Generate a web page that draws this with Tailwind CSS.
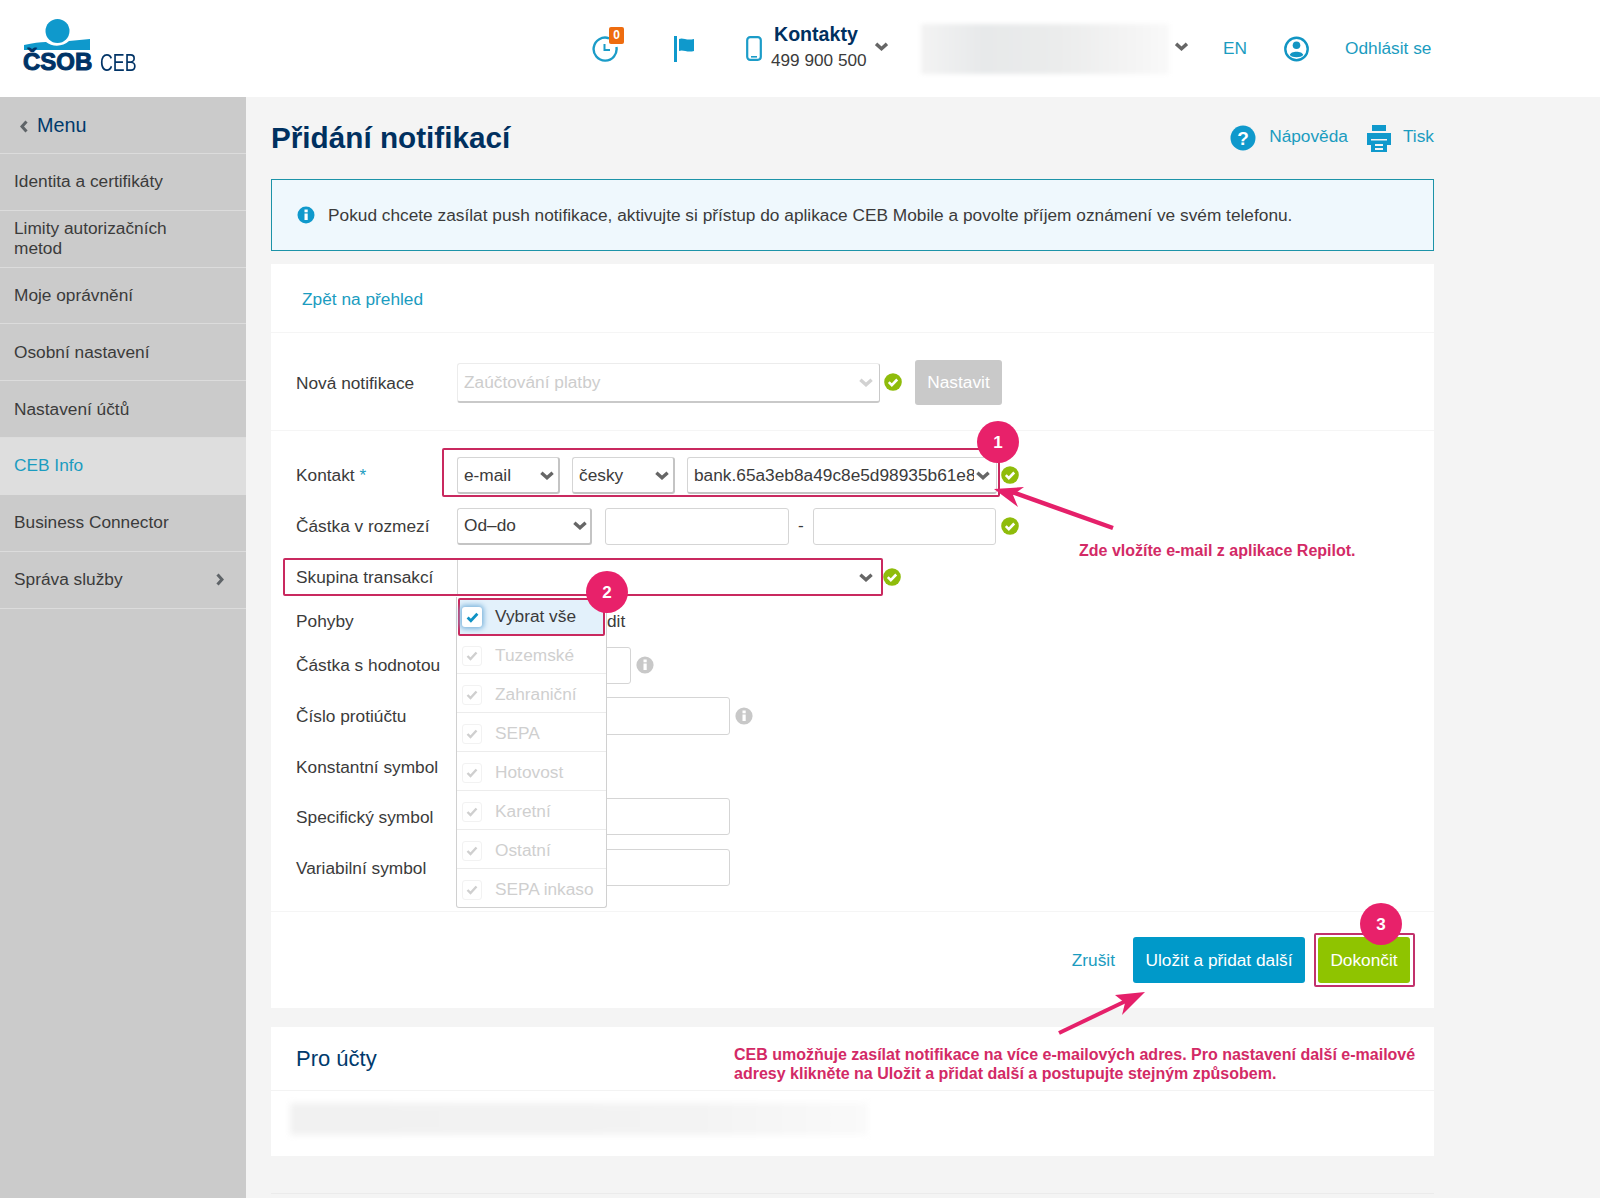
<!DOCTYPE html>
<html lang="cs">
<head>
<meta charset="utf-8">
<script src="https://cdn.jsdelivr.net/npm/@tailwindcss/browser@4"></script>
</head>
<body class="m-0">
<div class="relative w-[1600px] h-[1198px] overflow-hidden bg-[#f4f4f4] font-['Liberation_Sans',Arial,sans-serif] text-[17.3px] text-[#3b3b3b]">

  <!-- header -->
  <header class="flex items-center h-[97px] bg-white">
    <div class="relative w-[593px] h-[97px] shrink-0">
      <svg class="absolute left-[24px] top-[19px]" width="68" height="32" viewBox="24 19 68 32"><circle cx="57.5" cy="31" r="12" fill="#0f99cc"/><path d="M24 45C33 43 40 42 46 42C52 47 63 47 69 41L90 39V50H24Z" fill="#0f99cc"/></svg>
      <span class="absolute left-[23px] top-[48px] text-[24px] leading-[28px] font-bold text-[#003366] [-webkit-text-stroke:1px_#003366]">ČSOB</span>
      <span class="absolute left-[100px] top-[50px] text-[24px] leading-[26px] text-[#003366] origin-left scale-x-[0.74]">CEB</span>
    </div>
    <div class="relative w-[24px] h-[24px] shrink-0 mt-[1px]">
      <svg width="26" height="26" viewBox="0 0 26 26" class="-ml-[1px] -mt-[1px]" fill="none" stroke="#1b9cc8" stroke-width="2.4"><path d="M17 2.3A11.5 11.5 0 1 0 24.4 11"/><path d="M12.5 8v6h5.5" stroke-width="2"/></svg>
      <span class="absolute left-[16px] -top-[10px] w-[15px] h-[17px] rounded-[2px] bg-[#ee6c0f] text-white text-[12px] leading-[17px] font-bold text-center">0</span>
    </div>
    <svg class="ml-[57px] shrink-0" width="20" height="26" viewBox="0 0 20 26" fill="#0f99cc"><rect x="0" y="0" width="3" height="26"/><path d="M5 3C9 1 12 5 20 3V15C13 17 9 13 5 15Z"/></svg>
    <svg class="ml-[52px] shrink-0" width="16" height="25" viewBox="0 0 16 25" fill="none" stroke="#1b9cc8"><rect x="1.2" y="1.2" width="13.6" height="22.6" rx="3" stroke-width="2.2"/><rect x="5" y="20" width="6" height="1.6" fill="#1b9cc8" stroke="none"/></svg>
    <div class="ml-[9px] w-[104px] shrink-0 -mt-[4px]">
      <div class="pl-[3px] text-[19.6px] leading-[24px] font-bold text-[#00305f]">Kontakty</div>
      <div class="text-[17.2px] leading-[22px] mt-[3px]">499 900 500</div>
    </div>
    <svg class="shrink-0 -mt-[5px]" width="13" height="9" viewBox="0 0 12 8" fill="none" stroke="#666" stroke-width="3.2"><path d="M1 1.5L6 6L11 1.5"/></svg>
    <div class="ml-[33px] w-[248px] h-[50px] shrink-0 blur-[2px] bg-[linear-gradient(90deg,#f3f3f3,#e7e9ea_25%,#ebecec_55%,#f4f4f4_85%,#f9f9f9)]"></div>
    <svg class="ml-[6px] shrink-0 -mt-[4px]" width="13" height="9" viewBox="0 0 12 8" fill="none" stroke="#666" stroke-width="3.2"><path d="M1 1.5L6 6L11 1.5"/></svg>
    <span class="ml-[35px] w-[24px] text-[#1b9cc0]">EN</span>
    <svg class="ml-[37px] shrink-0" width="25" height="26" viewBox="0 0 25 26"><circle cx="12.5" cy="13" r="11.2" fill="none" stroke="#1295c3" stroke-width="2.4"/><circle cx="12.5" cy="9.3" r="3.8" fill="#1295c3"/><path d="M5.8 19C6.5 14.5 18.5 14.5 19.2 19C17 22 8 22 5.8 19Z" fill="#1295c3"/></svg>
    <span class="ml-[36px] text-[#1b9cc0]">Odhlásit se</span>
  </header>

  <div class="flex h-[1101px]">
    <!-- sidebar -->
    <nav class="w-[246px] shrink-0 bg-[#cbcbcb]">
      <div class="flex items-center h-[57px] pl-[20px] pt-[2px] border-b border-[#dcdcdc] text-[19.8px] text-[#003a6c]">
        <svg width="8" height="13" viewBox="0 0 8 13" fill="none" stroke="#5f6468" stroke-width="3" class="mr-[9px]"><path d="M6.5 1.5L2 6.5L6.5 11.5"/></svg>Menu
      </div>
      <div class="flex items-center h-[57px] pl-[14px] border-b border-[#dcdcdc]">Identita a certifikáty</div>
      <div class="flex items-center h-[57px] pl-[14px] pr-[40px] pb-[3px] leading-[20px] border-b border-[#dcdcdc]">Limity autorizačních metod</div>
      <div class="flex items-center h-[56px] pl-[14px] border-b border-[#dcdcdc]">Moje oprávnění</div>
      <div class="flex items-center h-[57px] pl-[14px] pt-[2px] border-b border-[#dcdcdc]">Osobní nastavení</div>
      <div class="flex items-center h-[57px] pl-[14px] pt-[2px] border-b border-[#dcdcdc]">Nastavení účtů</div>
      <div class="flex items-center h-[57px] pl-[14px] pb-[2px] bg-[#dedede] text-[#1b9cc0]">CEB Info</div>
      <div class="flex items-center h-[57px] pl-[14px] border-b border-[#dcdcdc]">Business Connector</div>
      <div class="flex items-center justify-between h-[57px] pl-[14px] pr-[22px] border-b border-[#dcdcdc]">Správa služby
        <svg width="8" height="13" viewBox="0 0 8 13" fill="none" stroke="#5f6468" stroke-width="3" class="-mt-[1px]"><path d="M1.5 1.5L6 6.5L1.5 11.5"/></svg>
      </div>
    </nav>

    <!-- main -->
    <main class="ml-[25px] w-[1163px] shrink-0">
      <div class="flex items-center h-[82px]">
        <h1 class="text-[29.7px] leading-[36px] font-bold text-[#00305f]">Přidání notifikací</h1>
        <div class="ml-auto flex items-center text-[#1b9cc0] -mt-[2px]">
          <svg width="26" height="26" viewBox="0 0 26 26" class="mt-[2px]"><circle cx="13" cy="13" r="12.5" fill="#0f99cc"/><text x="13" y="19.5" text-anchor="middle" font-family="Liberation Sans" font-weight="700" font-size="19" fill="#fff">?</text></svg>
          <span class="ml-[13px]">Nápověda</span>
          <svg width="26" height="27" viewBox="0 0 26 27" class="ml-[18px] mt-[2px]" fill="#0f99cc"><rect x="6" y="0" width="14" height="6"/><path d="M1 8H25V20H21V14H5V20H1Z"/><path d="M5 15.5H21V27H5ZM9 19V21H17V19ZM9 23V25H17V23Z" fill-rule="evenodd"/></svg>
          <span class="ml-[11px]">Tisk</span>
        </div>
      </div>

      <div class="flex items-center h-[72px] pl-[25px] border border-[#1c93a8] bg-[#eff8fd]">
        <svg width="18" height="18" viewBox="0 0 18 18" class="mr-[13px] shrink-0"><circle cx="9" cy="9" r="8.5" fill="#0f99cc"/><rect x="7.5" y="7.5" width="3.2" height="6.5" fill="#fff"/><rect x="7.5" y="3.5" width="3.2" height="2.8" fill="#fff"/></svg>
        <span class="pt-[2px]">Pokud chcete zasílat push notifikace, aktivujte si přístup do aplikace CEB Mobile a povolte příjem oznámení ve svém telefonu.</span>
      </div>

      <!-- card 1 -->
      <section class="mt-[13px] h-[744px] bg-white">
        <div class="flex items-center h-[69px] pl-[31px] pt-[3px] border-b border-[#f5f5f5] text-[#1b9cc0]">Zpět na přehled</div>
        <div class="flex items-start h-[98px] pl-[25px] pt-[27px] border-b border-[#f5f5f5]">
          <div class="w-[161px] h-[45px] pt-[2px] flex items-center">Nová notifikace</div>
          <div class="flex items-center justify-between w-[423px] h-[40px] mt-[3px] px-[6px] border border-[#ececec] border-b-2 border-b-[#c9c9c9] border-r-[#c9c9c9] rounded-[3px] text-[#cdcdcd]">Zaúčtování platby
            <svg width="14" height="9" viewBox="0 0 12 8" fill="none" stroke="#d2d2d2" stroke-width="3"><path d="M1 1.5L6 6L11 1.5"/></svg>
          </div>
          <svg width="18" height="18" viewBox="0 0 18 18" class="ml-[4px] mt-[13px] shrink-0"><circle cx="9" cy="9" r="8.8" fill="#8fbc0b"/><path d="M4.8 9.2L7.8 12.2L13.2 6.5" fill="none" stroke="#fff" stroke-width="2.6"/></svg>
          <div class="ml-[13px] flex items-center justify-center w-[87px] h-[45px] rounded-[3px] bg-[#c9c9c9] text-white">Nastavit</div>
        </div>

        <div class="pt-[18px] pl-[25px] h-[481px] border-b border-[#f5f5f5]">
          <div class="flex items-center h-[52px]">
            <div class="w-[161px] pt-[2px]">Kontakt <span class="text-[#1b9cc0]">*</span></div>
            <div class="flex items-center justify-between w-[103px] h-[37px] pl-[6px] pr-[4px] pt-[2px] border border-[#d5d5d5] border-b-2 border-b-[#c4c4c4] border-r-2 border-r-[#c4c4c4] rounded-[3px]">e-mail<svg width="14" height="9" viewBox="0 0 12 8" fill="none" stroke="#666" stroke-width="3"><path d="M1 1.5L6 6L11 1.5"/></svg></div>
            <div class="ml-[12px] flex items-center justify-between w-[103px] h-[37px] pl-[6px] pr-[4px] pt-[2px] border border-[#d5d5d5] border-b-2 border-b-[#c4c4c4] border-r-2 border-r-[#c4c4c4] rounded-[3px]">česky<svg width="14" height="9" viewBox="0 0 12 8" fill="none" stroke="#666" stroke-width="3"><path d="M1 1.5L6 6L11 1.5"/></svg></div>
            <div class="ml-[12px] flex items-center justify-between w-[310px] h-[37px] px-[6px] pt-[2px] border border-[#d5d5d5] border-b-2 border-b-[#c4c4c4] rounded-[3px]"><span class="w-[280px] overflow-hidden whitespace-nowrap">bank.65a3eb8a49c8e5d98935b61e8c</span><svg class="shrink-0" width="14" height="9" viewBox="0 0 12 8" fill="none" stroke="#666" stroke-width="3"><path d="M1 1.5L6 6L11 1.5"/></svg></div>
            <svg width="18" height="18" viewBox="0 0 18 18" class="ml-[4px] shrink-0"><circle cx="9" cy="9" r="8.8" fill="#8fbc0b"/><path d="M4.8 9.2L7.8 12.2L13.2 6.5" fill="none" stroke="#fff" stroke-width="2.6"/></svg>
          </div>
          <div class="flex items-center h-[50px]">
            <div class="w-[161px] pt-[2px]">Částka v rozmezí</div>
            <div class="flex items-center justify-between w-[135px] h-[37px] pl-[6px] pr-[3px] border border-[#d5d5d5] border-b-2 border-b-[#c4c4c4] border-r-2 border-r-[#c4c4c4] rounded-[3px]">Od–do<svg width="14" height="9" viewBox="0 0 12 8" fill="none" stroke="#666" stroke-width="3"><path d="M1 1.5L6 6L11 1.5"/></svg></div>
            <div class="ml-[13px] w-[184px] h-[37px] border border-[#d5d5d5] rounded-[3px]"></div>
            <span class="w-[24px] text-center">-</span>
            <div class="w-[183px] h-[37px] border border-[#d5d5d5] rounded-[3px]"></div>
            <svg width="18" height="18" viewBox="0 0 18 18" class="ml-[5px] shrink-0"><circle cx="9" cy="9" r="8.8" fill="#8fbc0b"/><path d="M4.8 9.2L7.8 12.2L13.2 6.5" fill="none" stroke="#fff" stroke-width="2.6"/></svg>
          </div>
          <div class="flex items-center h-[52px]">
            <div class="w-[161px] pt-[2px]">Skupina transakcí</div>
            <div class="flex items-center justify-end w-[423px] h-[37px] px-[7px] border-l border-[#d5d5d5]"><svg width="14" height="9" viewBox="0 0 12 8" fill="none" stroke="#666" stroke-width="3"><path d="M1 1.5L6 6L11 1.5"/></svg></div>
            <svg width="18" height="18" viewBox="0 0 18 18" class="ml-[3px] shrink-0"><circle cx="9" cy="9" r="8.8" fill="#8fbc0b"/><path d="M4.8 9.2L7.8 12.2L13.2 6.5" fill="none" stroke="#fff" stroke-width="2.6"/></svg>
          </div>
          <div class="flex items-center h-[36px] pt-[2px]">
            <div class="w-[311px]">Pohyby</div>
            <span>dit</span>
          </div>
          <div class="flex items-center h-[52px]">
            <div class="w-[161px] pt-[2px]">Částka s hodnotou</div>
            <div class="w-[174px] h-[37px] border border-[#d5d5d5] rounded-[3px]"></div>
            <svg width="18" height="18" viewBox="0 0 18 18" class="ml-[5px] shrink-0"><circle cx="9" cy="9" r="8.6" fill="#c8c8c8"/><rect x="7.5" y="7.5" width="3.2" height="6.5" fill="#fff"/><rect x="7.5" y="3.5" width="3.2" height="2.8" fill="#fff"/></svg>
          </div>
          <div class="flex items-center h-[50px]">
            <div class="w-[161px] pt-[2px]">Číslo protiúčtu</div>
            <div class="w-[273px] h-[38px] -mt-[1px] border border-[#d5d5d5] rounded-[3px]"></div>
            <svg width="18" height="18" viewBox="0 0 18 18" class="ml-[5px] shrink-0"><circle cx="9" cy="9" r="8.6" fill="#c8c8c8"/><rect x="7.5" y="7.5" width="3.2" height="6.5" fill="#fff"/><rect x="7.5" y="3.5" width="3.2" height="2.8" fill="#fff"/></svg>
          </div>
          <div class="flex items-center h-[52px] pt-[2px]">Konstantní symbol</div>
          <div class="flex items-center h-[48px]">
            <div class="w-[161px] pt-[2px]">Specifický symbol</div>
            <div class="w-[273px] h-[37px] -mt-[1px] border border-[#d5d5d5] rounded-[3px]"></div>
          </div>
          <div class="flex items-center h-[54px]">
            <div class="w-[161px] pt-[2px]">Variabilní symbol</div>
            <div class="w-[273px] h-[37px] -mt-[1px] border border-[#d5d5d5] rounded-[3px]"></div>
          </div>
        </div>

        <div class="flex items-center justify-end h-[96px] pr-[24px] pb-[1px]">
          <span class="text-[#1b9cc0] pt-[2px]">Zrušit</span>
          <div class="ml-[18px] flex items-center justify-center w-[172px] h-[46px] pt-[2px] rounded-[3px] bg-[#0099c9] text-white">Uložit a přidat další</div>
          <div class="ml-[13px] flex items-center justify-center w-[92px] h-[46px] pt-[2px] rounded-[3px] bg-[#8fc400] text-white">Dokončit</div>
        </div>
      </section>

      <!-- card 2 -->
      <section class="mt-[19px] h-[129px] bg-white">
        <div class="flex items-center h-[64px] pl-[25px] border-b border-[#f3f3f3] text-[22px] text-[#003a6c]">Pro účty</div>
        <div class="ml-[19px] mt-[12px] w-[578px] h-[32px] blur-[3px] bg-[linear-gradient(90deg,#f1f1f1,#f3f3f3_70%,#fafafa)]"></div>
      </section>
      <div class="mt-[37px] border-t border-[#ebebeb]"></div>
    </main>
  </div>

  <!-- dropdown overlay -->
  <div class="absolute left-[456px] top-[597px] w-[151px] h-[311px] border border-t-0 border-[#d0d0d0] rounded-b-[3px] bg-white text-[#cfcfcf]">
    <div class="h-[39px]"></div>
    <div class="flex items-center h-[38px] pl-[5px] pt-[2px] border-b border-[#ececec]"><span class="flex items-center justify-center w-[20px] h-[20px] mr-[13px] rounded-[3px] border border-[#f2f2f2]"><svg width="12" height="10" viewBox="0 0 12 10" fill="none" stroke="#cfcfcf" stroke-width="2.4"><path d="M1.5 5L4.5 8L10.5 1.5"/></svg></span>Tuzemské</div>
    <div class="flex items-center h-[39px] pl-[5px] pt-[3px] border-b border-[#ececec]"><span class="flex items-center justify-center w-[20px] h-[20px] mr-[13px] rounded-[3px] border border-[#f2f2f2]"><svg width="12" height="10" viewBox="0 0 12 10" fill="none" stroke="#cfcfcf" stroke-width="2.4"><path d="M1.5 5L4.5 8L10.5 1.5"/></svg></span>Zahraniční</div>
    <div class="flex items-center h-[39px] pl-[5px] pt-[3px] border-b border-[#ececec]"><span class="flex items-center justify-center w-[20px] h-[20px] mr-[13px] rounded-[3px] border border-[#f2f2f2]"><svg width="12" height="10" viewBox="0 0 12 10" fill="none" stroke="#cfcfcf" stroke-width="2.4"><path d="M1.5 5L4.5 8L10.5 1.5"/></svg></span>SEPA</div>
    <div class="flex items-center h-[39px] pl-[5px] pt-[3px] border-b border-[#ececec]"><span class="flex items-center justify-center w-[20px] h-[20px] mr-[13px] rounded-[3px] border border-[#f2f2f2]"><svg width="12" height="10" viewBox="0 0 12 10" fill="none" stroke="#cfcfcf" stroke-width="2.4"><path d="M1.5 5L4.5 8L10.5 1.5"/></svg></span>Hotovost</div>
    <div class="flex items-center h-[39px] pl-[5px] pt-[3px] border-b border-[#ececec]"><span class="flex items-center justify-center w-[20px] h-[20px] mr-[13px] rounded-[3px] border border-[#f2f2f2]"><svg width="12" height="10" viewBox="0 0 12 10" fill="none" stroke="#cfcfcf" stroke-width="2.4"><path d="M1.5 5L4.5 8L10.5 1.5"/></svg></span>Karetní</div>
    <div class="flex items-center h-[39px] pl-[5px] pt-[3px] border-b border-[#ececec]"><span class="flex items-center justify-center w-[20px] h-[20px] mr-[13px] rounded-[3px] border border-[#f2f2f2]"><svg width="12" height="10" viewBox="0 0 12 10" fill="none" stroke="#cfcfcf" stroke-width="2.4"><path d="M1.5 5L4.5 8L10.5 1.5"/></svg></span>Ostatní</div>
    <div class="flex items-center h-[38px] pl-[5px] pt-[3px]"><span class="flex items-center justify-center w-[20px] h-[20px] mr-[13px] rounded-[3px] border border-[#f2f2f2]"><svg width="12" height="10" viewBox="0 0 12 10" fill="none" stroke="#cfcfcf" stroke-width="2.4"><path d="M1.5 5L4.5 8L10.5 1.5"/></svg></span>SEPA inkaso</div>
  </div>
  <div class="absolute left-[458px] top-[598px] flex items-center w-[147px] h-[38px] pl-[2px] border-[2.5px] border-[#c9295f] rounded-[2px] bg-[#e3f1fb]">
    <span class="flex items-center justify-center w-[20px] h-[20px] mr-[13px] rounded-[3px] bg-white shadow-[0_0_5px_2px_#7fb6dd]"><svg width="13" height="11" viewBox="0 0 12 10" fill="none" stroke="#0f92c4" stroke-width="2.6"><path d="M1.5 5L4.5 8L10.5 1.5"/></svg></span>Vybrat vše
  </div>

  <!-- annotation frames -->
  <div class="absolute left-[442px] top-[448px] w-[558px] h-[49px] border-[2.5px] border-[#c9295f] rounded-[2px]"></div>
  <div class="absolute left-[283px] top-[558px] w-[600px] h-[38px] border-[2.5px] border-[#c9295f] rounded-[2px]"></div>
  <div class="absolute left-[1314px] top-[933px] w-[101px] h-[54px] border-[2.5px] border-[#c2316b] rounded-[2px]"></div>

  <!-- arrows -->
  <svg class="absolute left-0 top-0" width="1600" height="1198" viewBox="0 0 1600 1198" fill="#e5206a" stroke="none">
    <path d="M1113 528L1012 492" stroke="#e5206a" stroke-width="4.5"/>
    <path d="M994 489L1024 487L1013 495L1018 507Z"/>
    <path d="M1059 1033L1128 1000" stroke="#e5206a" stroke-width="4"/>
    <path d="M1145 992L1115 995L1125 1003L1122 1015Z"/>
  </svg>

  <!-- numbered badges -->
  <div class="absolute left-[977px] top-[421px] flex items-center justify-center w-[42px] h-[42px] pt-[2px] rounded-full bg-[#e8216a] text-white text-[17px] font-bold">1</div>
  <div class="absolute left-[586px] top-[571px] flex items-center justify-center w-[42px] h-[42px] pt-[2px] rounded-full bg-[#e8216a] text-white text-[17px] font-bold">2</div>
  <div class="absolute left-[1360px] top-[903px] flex items-center justify-center w-[42px] h-[42px] pt-[2px] rounded-full bg-[#e8216a] text-white text-[17px] font-bold">3</div>

  <!-- annotation texts -->
  <p class="absolute left-[1079px] top-[541px] text-[16px] leading-[20px] font-bold text-[#d32a66] whitespace-nowrap">Zde vložíte e-mail z aplikace Repilot.</p>
  <p class="absolute left-[734px] top-[1045px] w-[700px] text-[16px] leading-[19px] font-bold text-[#d32a66]">CEB umožňuje zasílat notifikace na více e-mailových adres. Pro nastavení další e-mailové<br>adresy klikněte na Uložit a přidat další a postupujte stejným způsobem.</p>
</div>
</body>
</html>
